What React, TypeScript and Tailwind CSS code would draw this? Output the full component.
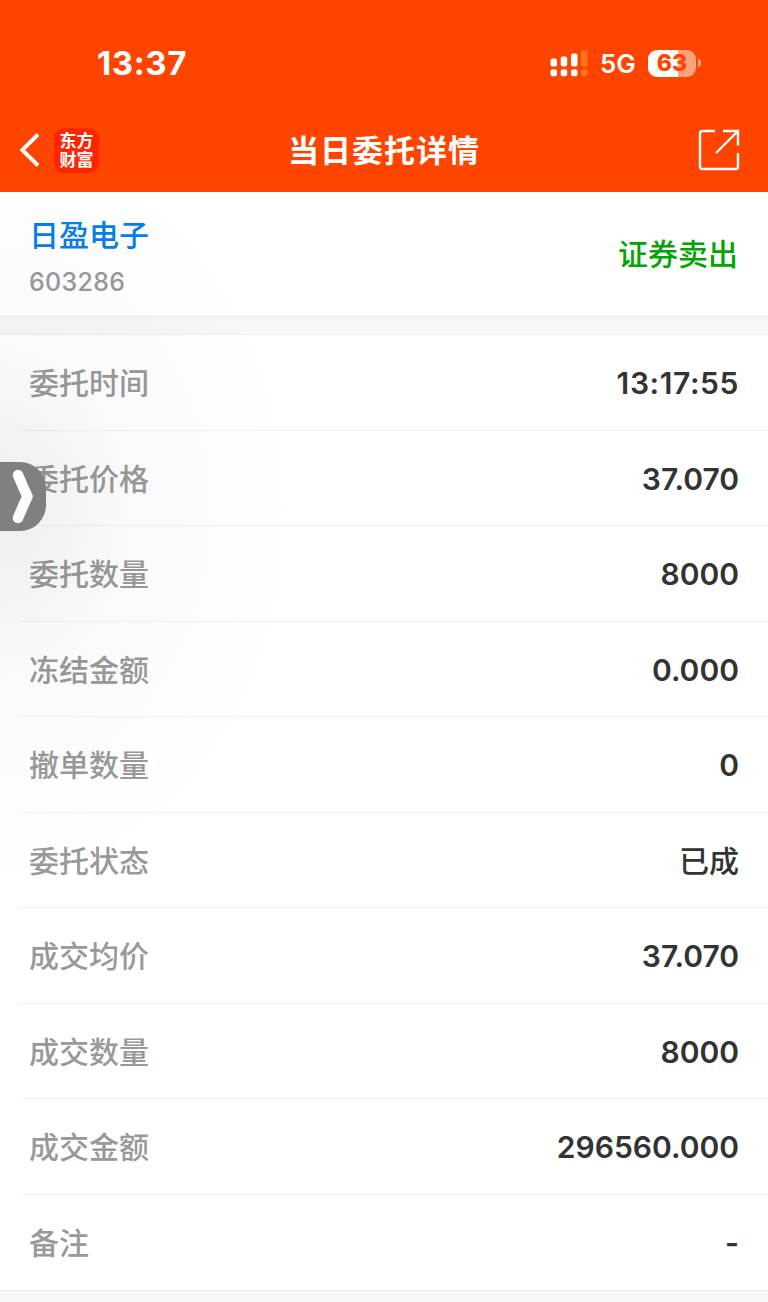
import clsx from "clsx";

const rows = [
  { label: "委托时间", value: "13:17:55" },
  { label: "委托价格", value: "37.070" },
  { label: "委托数量", value: "8000" },
  { label: "冻结金额", value: "0.000" },
  { label: "撤单数量", value: "0" },
  { label: "委托状态", value: "已成" },
  { label: "成交均价", value: "37.070" },
  { label: "成交数量", value: "8000" },
  { label: "成交金额", value: "296560.000" },
  { label: "备注", value: "-" },
];

function SignalIcon() {
  return (
    <svg width="38" height="27" viewBox="0 0 38 27" fill="white">
      <rect x="0.5" y="8.5" width="6.5" height="8" rx="2" />
      <rect x="10.7" y="6.5" width="6.5" height="10" rx="2" />
      <rect x="21" y="3.5" width="6.5" height="13" rx="2" />
      <rect x="31" y="0.5" width="6.5" height="16" rx="2" fill="#ff7417" />
      <rect x="0.5" y="19.3" width="6.5" height="7" rx="2" />
      <rect x="10.7" y="19.3" width="6.5" height="7" rx="2" />
      <rect x="21" y="19.3" width="6.5" height="7" rx="2" />
      <rect x="31" y="19.3" width="6.5" height="7" rx="2" fill="#ff7417" />
    </svg>
  );
}

function StatusBar() {
  return (
    <div className="flex h-[108px] items-center justify-between pt-[18px] pr-[67px] pl-[97px]">
      <span className="text-[33px] leading-none font-bold tracking-[0.6px]">
        13:37
      </span>
      <div className="flex items-center">
        <SignalIcon />
        <span className="ml-3 w-[48px] pt-px text-[26px] leading-none font-semibold">
          5G
        </span>
        <div className="flex h-[27px] w-[48px] items-center justify-center rounded-[9px] bg-linear-to-r from-white from-[63%] to-[#ffa27d] to-[63%] text-[23px] leading-none font-extrabold text-[#ff4400]">
          63
        </div>
        <div className="ml-[2px] h-2 w-[3px] rounded-r-full bg-[#ffa27d]" />
      </div>
    </div>
  );
}

function Header() {
  return (
    <div className="grid h-[84px] grid-cols-[1fr_auto_1fr] items-center pr-7 pl-[19px]">
      <div className="flex items-center">
        <svg width="22" height="36" viewBox="0 0 22 36" fill="none">
          <path d="M19 2.5 L3.3 18 L19 33.5" stroke="white" strokeWidth="3.9" />
        </svg>
        <div className="ml-[13px] flex h-[45px] w-[45px] items-center justify-center rounded-[10px] bg-[#ff2500]">
          <div className="w-[34px] pb-px font-['Noto_Sans_CJK_SC',sans-serif] text-[17px] leading-[18.5px] font-bold">
            东方财富
          </div>
        </div>
      </div>
      <h1 className="ml-[9px] text-[31px] leading-none font-bold tracking-[1px]">
        当日委托详情
      </h1>
      <svg
        className="justify-self-end"
        width="42"
        height="42"
        viewBox="0 0 42 42"
        fill="none"
        stroke="white"
        strokeWidth="2.4"
      >
        <path d="M17 2 H4.5 Q2 2 2 4.5 V37.5 Q2 40 4.5 40 H37.5 Q40 40 40 37.5 V24" />
        <path d="M25 2 H40 V16.5 M39.5 2.5 L18 24" />
      </svg>
    </div>
  );
}

export default function App() {
  return (
    <div className="relative flex h-[1302px] w-[768px] flex-col overflow-hidden bg-white font-['Inter','Noto_Sans_CJK_SC',sans-serif]">
      <header className="h-[192px] shrink-0 bg-[#ff4400] text-white">
        <StatusBar />
        <Header />
      </header>

      {/* Stock */}
      <section className="flex h-[124px] shrink-0 items-center justify-between px-[29px]">
        <div className="pt-[5px]">
          <div className="text-[30px] leading-[36px] font-medium text-[#0580e8]">
            日盈电子
          </div>
          <div className="mt-[14px] text-[25px] leading-[30px] font-medium tracking-[0.3px] text-[#999]">
            603286
          </div>
        </div>
        <div className="pr-px text-[30px] leading-none font-medium text-[#04a404]">
          证券卖出
        </div>
      </section>

      <div className="h-[19px] shrink-0 border-y border-[#ebecee] bg-[#f5f7f9]" />

      {/* Order fields */}
      <section className="shrink-0">
        {rows.map((row, i) => (
          <div key={row.label} className="h-[95.5px] pl-5">
            <div
              className={clsx(
                "flex h-full items-center justify-between border-b pt-[2px] pr-[29px] pl-[9px] text-[30px] leading-none font-medium",
                i === rows.length - 1 ? "border-transparent" : "border-[#f1f1f1]",
              )}
            >
              <span className="text-[#999]">{row.label}</span>
              <span
                className={clsx(
                  "text-[#333]",
                  row.value !== "已成" && "font-semibold",
                  row.value.includes(":") && "tracking-[0.6px]",
                )}
              >
                {row.value}
              </span>
            </div>
          </div>
        ))}
      </section>

      <div className="flex-1 border-t border-[#ebecee] bg-[#f5f7f9]" />

      {/* Soft shadow around the side handle */}
      <div className="pointer-events-none absolute top-[192px] left-0 h-[700px] w-[310px] bg-[radial-gradient(ellipse_300px_380px_at_0px_320px,rgba(0,0,0,0.065),rgba(0,0,0,0.02)_45%,transparent)]" />

      <button className="absolute top-[462px] left-0 h-[69px] w-[46px] rounded-r-[26px] bg-[#808080]">
        <svg width="46" height="69" viewBox="0 0 46 69" fill="none">
          <path
            d="M18 13 Q23 25 27.5 34.5 Q23 44 18 56"
            stroke="white"
            strokeWidth="10.5"
            strokeLinecap="round"
            strokeLinejoin="round"
          />
        </svg>
      </button>
    </div>
  );
}
